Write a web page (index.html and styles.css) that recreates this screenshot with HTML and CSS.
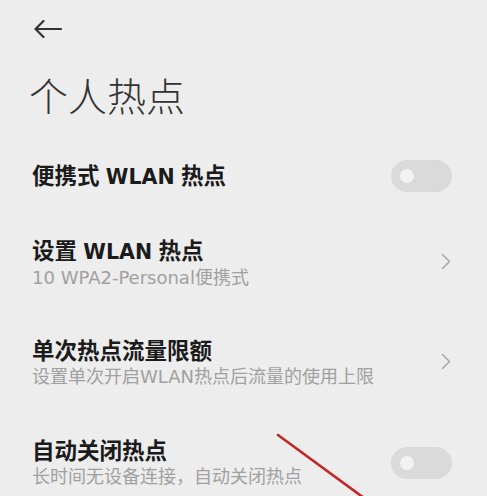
FILE: index.html
```html
<!DOCTYPE html>
<html lang="zh">
<head>
<meta charset="utf-8">
<link rel="stylesheet" href="styles.css">
</head>
<body>
<div class="page">
  <div class="topbar">
    <svg class="back" width="28" height="18" viewBox="0 0 28 18">
      <path d="M1.5 9 H27 M9.5 1 L1.5 9 L9.5 17" fill="none" stroke="#333" stroke-width="2.2" stroke-linecap="round" stroke-linejoin="round"/>
    </svg>
  </div>
  <h1 class="title">个人热点</h1>
  <div class="list">
    <div class="row single">
      <div class="text"><div class="label">便携式 <span class="en">WLAN</span> 热点</div></div>
      <div class="toggle"><span class="knob"></span></div>
    </div>
    <div class="row">
      <div class="inner">
        <div class="text">
          <div class="label">设置 <span class="en">WLAN</span> 热点</div>
          <div class="sub">10 WPA2-Personal便携式</div>
        </div>
        <svg class="chev" width="10" height="17" viewBox="0 0 10 17"><path d="M1.5 1.5 L8.5 8.5 L1.5 15.5" fill="none" stroke="#a8a8a8" stroke-width="1.5" stroke-linecap="round" stroke-linejoin="round"/></svg>
      </div>
    </div>
    <div class="row">
      <div class="inner">
        <div class="text">
          <div class="label">单次热点流量限额</div>
          <div class="sub">设置单次开启WLAN热点后流量的使用上限</div>
        </div>
        <svg class="chev" width="10" height="17" viewBox="0 0 10 17"><path d="M1.5 1.5 L8.5 8.5 L1.5 15.5" fill="none" stroke="#a8a8a8" stroke-width="1.5" stroke-linecap="round" stroke-linejoin="round"/></svg>
      </div>
    </div>
    <div class="row">
      <div class="inner">
        <div class="text">
          <div class="label">自动关闭热点</div>
          <div class="sub">长时间无设备连接，自动关闭热点</div>
        </div>
        <div class="toggle"><span class="knob"></span></div>
      </div>
    </div>
  </div>
  <svg class="mark" width="487" height="496" viewBox="0 0 487 496">
    <line x1="278" y1="435" x2="364" y2="498" stroke="#c42424" stroke-width="2.6" stroke-linecap="round"/>
  </svg>
</div>
</body>
</html>
```
FILE: styles.css
```css
html, body {
  margin: 0;
  padding: 0;
  background: #ededed;
}
.page {
  position: relative;
  width: 487px;
  height: 496px;
  overflow: hidden;
  background: #ededed;
  font-family: "Noto Sans CJK SC", "Noto Sans", sans-serif;
}
.topbar {
  height: 58px;
  padding-left: 34px;
  display: flex;
  align-items: center;
}
.back { display: block; }
.title {
  margin: 0;
  padding-left: 29px;
  height: 63px;
  line-height: 72px;
  font-size: 39px;
  font-weight: 300;
  color: #333;
}
.list {
  margin-top: 11px;
}
.row {
  padding: 0 35px 0 32px;
  box-sizing: border-box;
}
.row.single {
  height: 88px;
  display: flex;
  align-items: center;
  justify-content: space-between;
}
.row:not(.single) {
  height: 100px;
  padding-top: 17px;
}
.inner {
  height: 52px;
  display: flex;
  align-items: center;
  justify-content: space-between;
}
.label {
  font-family: "DejaVu Sans", "Noto Sans CJK SC", sans-serif;
  font-size: 22.5px;
  line-height: 28px;
  font-weight: 700;
  color: #1b1b1b;
  word-spacing: -1.5px;
}
.label .en {
  font-size: 20.5px;
}
.sub {
  font-family: "DejaVu Sans", "Noto Sans CJK SC", sans-serif;
  font-size: 18px;
  line-height: 24px;
  color: #a0a0a0;
  font-weight: 400;
}
.chev {
  display: block;
  margin-right: 1px;
  margin-top: -4px;
}
.toggle {
  width: 61px;
  height: 32px;
  border-radius: 16px;
  background: #dadada;
  position: relative;
  flex: none;
}
.knob {
  position: absolute;
  left: 9px;
  top: 9px;
  width: 14px;
  height: 14px;
  border-radius: 50%;
  background: #f2f2f2;
}
.mark {
  position: absolute;
  left: 0;
  top: 0;
  pointer-events: none;
}
```
